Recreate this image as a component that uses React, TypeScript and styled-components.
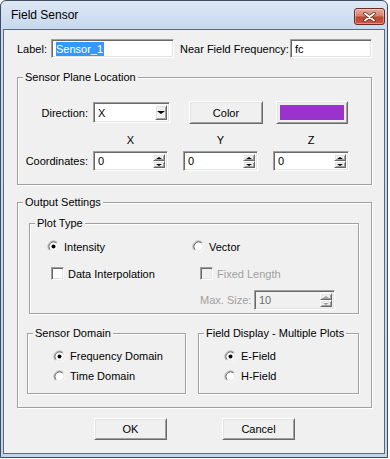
import styled, { createGlobalStyle } from "styled-components";

const GlobalStyle = createGlobalStyle`
  body {
    margin: 0;
    background: #fff;
    font-family: "Liberation Sans", Arial, sans-serif;
    font-size: 11px;
    color: #000;
  }
  * {
    box-sizing: border-box;
  }
`;

const Window = styled.div`
  width: 388px;
  height: 458px;
  border: 1px solid #3d4c5e;
  border-radius: 6px 6px 0 0;
  background: linear-gradient(#dde8f5, #c7d9ee 28px, #c0d4ea);
  padding: 0 2px 3px;
  display: flex;
  flex-direction: column;
`;

const TitleBar = styled.div`
  height: 28px;
  flex: none;
  display: flex;
  align-items: flex-start;
  justify-content: space-between;
  padding-left: 8px;
`;

const TitleText = styled.span`
  font-size: 12px;
  line-height: 28px;
`;

const CloseButton = styled.div`
  width: 31px;
  height: 17px;
  margin-top: 7px;
  border: 1px solid #6b2a22;
  border-radius: 3px;
  background: linear-gradient(#e9ab9d, #d8806c 45%, #c1432f 55%, #cc5a40);
  box-shadow: inset 0 0 0 1px rgba(255, 255, 255, 0.35);
  display: flex;
  align-items: center;
  justify-content: center;
`;

const Client = styled.div`
  flex: 1;
  background: #f0f0f0;
  border: 1px solid #5d6b7a;
  padding: 9px 12px 0 13px;
  display: flex;
  flex-direction: column;
`;

const TopRow = styled.div`
  display: flex;
  align-items: center;
  height: 19px;
`;

const FieldLabel = styled.span<{ $w: number; $ml?: number }>`
  width: ${(p) => p.$w}px;
  margin-left: ${(p) => p.$ml ?? 0}px;
  flex: none;
  white-space: nowrap;
`;

const sunken = `
  border: 1px solid;
  border-color: #a0a0a0 #fff #fff #a0a0a0;
  box-shadow: inset 1px 1px #696969, inset -1px -1px #e3e3e3;
`;

const raised = `
  border: 1px solid;
  border-color: #fff #696969 #696969 #fff;
  box-shadow: inset 1px 1px #e3e3e3, inset -1px -1px #a0a0a0;
  background: #f0f0f0;
`;

const TextBox = styled.div<{ $w: number; $h: number; $disabled?: boolean }>`
  ${sunken}
  width: ${(p) => p.$w}px;
  height: ${(p) => p.$h}px;
  flex: none;
  background: ${(p) => (p.$disabled ? "#f0f0f0" : "#fff")};
  color: ${(p) => (p.$disabled ? "#6d6d6d" : "#000")};
  display: flex;
  align-items: stretch;
  padding: 2px 2px 2px 4px;
`;

const BoxText = styled.span`
  flex: 1;
  display: flex;
  align-items: center;
  white-space: nowrap;
`;

const Selected = styled.span`
  background: #3399ff;
  color: #fff;
  padding: 1px 1px 1px 0;
`;

const SideButton = styled.div`
  ${raised}
  width: 12px;
  flex: none;
  display: flex;
  align-items: center;
  justify-content: center;
`;

const SpinStack = styled.div`
  width: 12px;
  flex: none;
  display: flex;
  flex-direction: column;
`;

const SpinHalf = styled(SideButton)`
  width: 12px;
  flex: 1;
`;

const Arrow = styled.span<{ $up?: boolean; $size: number; $color: string }>`
  width: 0;
  height: 0;
  border-left: ${(p) => p.$size}px solid transparent;
  border-right: ${(p) => p.$size}px solid transparent;
  ${(p) =>
    p.$up
      ? `border-bottom: ${p.$size - 1}px solid ${p.$color};`
      : `border-top: ${p.$size - 1}px solid ${p.$color};`}
`;

const Group = styled.div<{ $mt: number; $pb: number; $mx?: string }>`
  border: 1px solid #a0a0a0;
  box-shadow: inset 1px 1px #fff, 1px 1px #fff;
  margin-top: ${(p) => p.$mt}px;
  margin-left: ${(p) => (p.$mx ? p.$mx.split(" ")[0] : "0")};
  margin-right: ${(p) => (p.$mx ? p.$mx.split(" ")[1] : "0")};
  padding-bottom: ${(p) => p.$pb}px;
`;

const Legend = styled.div`
  width: fit-content;
  height: 13px;
  line-height: 13px;
  margin: -7px 0 0 5px;
  padding: 0 2px;
  background: #f0f0f0;
  white-space: nowrap;
`;

const DirectionRow = styled.div`
  display: flex;
  align-items: center;
  height: 23px;
  margin-top: 17px;
`;

const RowLabel = styled.span`
  width: 75px;
  padding-right: 5px;
  text-align: right;
  flex: none;
`;

const CoordLabel = styled.span`
  justify-self: end;
  margin-right: -10px;
  white-space: nowrap;
`;

const PushButton = styled.div<{ $w: number; $h: number; $ml?: number }>`
  ${raised}
  width: ${(p) => p.$w}px;
  height: ${(p) => p.$h}px;
  margin-left: ${(p) => p.$ml ?? 0}px;
  flex: none;
  display: flex;
  align-items: center;
  justify-content: center;
`;

const Swatch = styled(PushButton)`
  padding: 3px;
  align-items: stretch;
  justify-content: stretch;
`;

const SwatchFill = styled.div<{ $color: string }>`
  flex: 1;
  background: ${(p) => p.$color};
`;

const CoordGrid = styled.div`
  display: grid;
  grid-template-columns: 60px 75px 75px 76px;
  grid-template-rows: 13px 20px;
  column-gap: 15px;
  row-gap: 4px;
  margin-top: 10px;
  align-items: center;
`;

const AxisHead = styled.span`
  text-align: center;
  line-height: 13px;
`;

const PlotGrid = styled.div`
  display: grid;
  grid-template-columns: 145px 1fr;
  grid-template-rows: 27px 23px 20px;
  margin-top: 10px;
  padding-left: 17px;
  align-items: start;
`;

const Choice = styled.div<{ $ml?: number; $disabled?: boolean }>`
  display: flex;
  align-items: center;
  gap: 4px;
  height: 13px;
  margin-left: ${(p) => p.$ml ?? 0}px;
  color: ${(p) => (p.$disabled ? "#a0a0a0" : "#000")};
  white-space: nowrap;
`;

const Check = styled.span<{ $disabled?: boolean }>`
  ${sunken}
  width: 13px;
  height: 13px;
  flex: none;
  background: ${(p) => (p.$disabled ? "#f0f0f0" : "#fff")};
`;

const SizeRow = styled.div`
  display: flex;
  align-items: center;
  margin-left: 8px;
  color: #a0a0a0;
`;

const DomainGrid = styled.div`
  display: grid;
  grid-template-columns: 159px 161px;
  column-gap: 12px;
  margin: 19px 0 0 9px;
`;

const OptionList = styled.div`
  display: flex;
  flex-direction: column;
  gap: 4px;
  margin-top: 8px;
  padding-left: 25px;
`;

const OptionRow = styled.div`
  height: 16px;
  display: flex;
  align-items: center;
`;

const Footer = styled.div`
  display: flex;
  justify-content: center;
  gap: 55px;
  margin-top: 10px;
`;

function Radio({ checked }: { checked?: boolean }) {
  return (
    <svg width="13" height="13" viewBox="0 0 13 13">
      <circle cx="6.5" cy="6.5" r="4.5" fill="#fff" />
      <path d="M2.61 10.39A5.5 5.5 0 0 1 10.39 2.61" stroke="#a0a0a0" fill="none" />
      <path d="M10.39 2.61A5.5 5.5 0 0 1 2.61 10.39" stroke="#fff" fill="none" />
      <path d="M3.32 9.68A4.5 4.5 0 0 1 9.68 3.32" stroke="#696969" fill="none" />
      <path d="M9.68 3.32A4.5 4.5 0 0 1 3.32 9.68" stroke="#e3e3e3" fill="none" />
      {checked && <circle cx="6.5" cy="6.5" r="2" fill="#000" />}
    </svg>
  );
}

function Spin({ value, w, disabled }: { value: string; w: number; disabled?: boolean }) {
  const c = disabled ? "#a0a0a0" : "#000";
  return (
    <TextBox $w={w} $h={20} $disabled={disabled}>
      <BoxText>{value}</BoxText>
      <SpinStack>
        <SpinHalf>
          <Arrow $up $size={3} $color={c} />
        </SpinHalf>
        <SpinHalf>
          <Arrow $size={3} $color={c} />
        </SpinHalf>
      </SpinStack>
    </TextBox>
  );
}

export default function App() {
  return (
    <>
      <GlobalStyle />
      <Window>
        <TitleBar>
          <TitleText>Field Sensor</TitleText>
          <CloseButton>
            <svg width="13" height="10" viewBox="0 0 13 10">
              <path d="M2 1.5L11 8.5M11 1.5L2 8.5" stroke="#5a1e16" strokeWidth="3.4" strokeLinecap="round" />
              <path d="M2 1.5L11 8.5M11 1.5L2 8.5" stroke="#fff" strokeWidth="2" strokeLinecap="round" />
            </svg>
          </CloseButton>
        </TitleBar>
        <Client>
          <TopRow>
            <FieldLabel $w={34}>Label:</FieldLabel>
            <TextBox $w={123} $h={19}>
              <BoxText>
                <Selected>Sensor_1</Selected>
              </BoxText>
            </TextBox>
            <FieldLabel $w={110} $ml={6}>
              Near Field Frequency:
            </FieldLabel>
            <TextBox $w={82} $h={19}>
              <BoxText>fc</BoxText>
            </TextBox>
          </TopRow>

          <Group $mt={19} $pb={13}>
            <Legend>Sensor Plane Location</Legend>
            <DirectionRow>
              <RowLabel>Direction:</RowLabel>
              <TextBox $w={77} $h={21}>
                <BoxText>X</BoxText>
                <SideButton>
                  <Arrow $size={4} $color="#000" />
                </SideButton>
              </TextBox>
              <PushButton $w={74} $h={23} $ml={19}>
                Color
              </PushButton>
              <Swatch $w={72} $h={23} $ml={13}>
                <SwatchFill $color="#9933cc" />
              </Swatch>
            </DirectionRow>
            <CoordGrid>
              <span />
              <AxisHead>X</AxisHead>
              <AxisHead>Y</AxisHead>
              <AxisHead>Z</AxisHead>
              <CoordLabel>Coordinates:</CoordLabel>
              <Spin value="0" w={75} />
              <Spin value="0" w={75} />
              <Spin value="0" w={76} />
            </CoordGrid>
          </Group>

          <Group $mt={17} $pb={13}>
            <Legend>Output Settings</Legend>
            <Group $mt={14} $pb={3} $mx="11px 12px">
              <Legend>Plot Type</Legend>
              <PlotGrid>
                <Choice>
                  <Radio checked />
                  Intensity
                </Choice>
                <Choice>
                  <Radio />
                  Vector
                </Choice>
                <Choice $ml={4}>
                  <Check />
                  Data Interpolation
                </Choice>
                <Choice $ml={8} $disabled>
                  <Check $disabled />
                  Fixed Length
                </Choice>
                <span />
                <SizeRow>
                  <FieldLabel $w={54}>Max. Size:</FieldLabel>
                  <Spin value="10" w={81} disabled />
                </SizeRow>
              </PlotGrid>
            </Group>
            <DomainGrid>
              <Group $mt={0} $pb={9}>
                <Legend>Sensor Domain</Legend>
                <OptionList>
                  <OptionRow>
                    <Choice>
                      <Radio checked />
                      Frequency Domain
                    </Choice>
                  </OptionRow>
                  <OptionRow>
                    <Choice>
                      <Radio />
                      Time Domain
                    </Choice>
                  </OptionRow>
                </OptionList>
              </Group>
              <Group $mt={0} $pb={9}>
                <Legend>Field Display - Multiple Plots</Legend>
                <OptionList>
                  <OptionRow>
                    <Choice>
                      <Radio checked />
                      E-Field
                    </Choice>
                  </OptionRow>
                  <OptionRow>
                    <Choice>
                      <Radio />
                      H-Field
                    </Choice>
                  </OptionRow>
                </OptionList>
              </Group>
            </DomainGrid>
          </Group>

          <Footer>
            <PushButton $w={73} $h={22}>
              OK
            </PushButton>
            <PushButton $w={73} $h={22}>
              Cancel
            </PushButton>
          </Footer>
        </Client>
      </Window>
    </>
  );
}
